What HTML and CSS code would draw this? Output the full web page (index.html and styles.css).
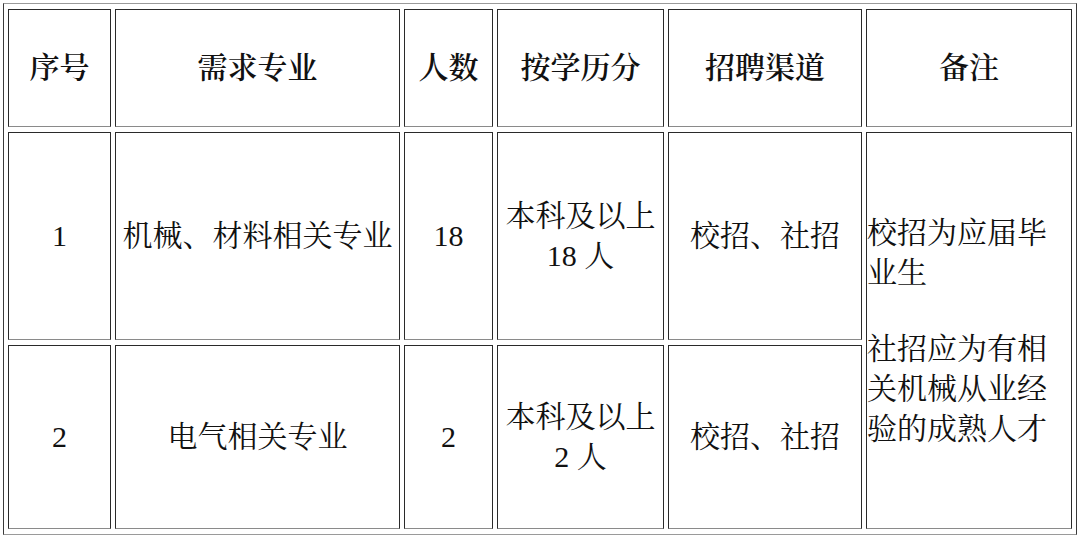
FILE: index.html
```html
<!DOCTYPE html>
<html lang="zh-CN">
<head>
<meta charset="utf-8">
<title>招聘需求</title>
<link rel="stylesheet" href="styles.css">
</head>
<body>
<table class="jobs">
  <colgroup>
    <col class="c1"><col class="c2"><col class="c3"><col class="c4"><col class="c5"><col class="c6">
  </colgroup>
  <tr class="head">
    <th>序号</th>
    <th>需求专业</th>
    <th>人数</th>
    <th>按学历分</th>
    <th>招聘渠道</th>
    <th>备注</th>
  </tr>
  <tr class="r1">
    <td>1</td>
    <td>机械、材料相关专业</td>
    <td>18</td>
    <td>本科及以上<br>18 人</td>
    <td>校招、社招</td>
    <td class="note" rowspan="2">
      <p>校招为应届毕业生</p>
      <p class="gap">社招应为有相关机械从业经验的成熟人才</p>
    </td>
  </tr>
  <tr class="r2">
    <td>2</td>
    <td>电气相关专业</td>
    <td>2</td>
    <td>本科及以上<br>2 人</td>
    <td>校招、社招</td>
  </tr>
</table>
</body>
</html>
```

FILE: styles.css
```css
html, body {
  margin: 0;
  padding: 0;
  background: #ffffff;
}

.jobs {
  margin: 3px 0 0 3px;
  width: 1074px;
  table-layout: fixed;
  border-collapse: separate;
  border-spacing: 4px 5px;
  border-top: 1px solid #9a9a9a;
  border-left: 1px solid #3a3a3a;
  border-right: 1px solid #3a3a3a;
  border-bottom: 1px solid #9a9a9a;
  font-family: "Liberation Serif", "Noto Serif CJK SC", "Noto Sans CJK SC", serif;
  font-size: 30px;
  line-height: 40px;
  color: #111;
}

.c1 { width: 103px; }
.c2 { width: 285px; }
.c3 { width: 89px; }
.c4 { width: 167px; }
.c5 { width: 194px; }
.c6 { width: 206px; }

.jobs th,
.jobs td {
  box-sizing: border-box;
  padding: 0 1px;
  text-align: center;
  vertical-align: middle;
  border-top: 1px solid #2a2a2a;
  border-left: 1px solid #2a2a2a;
  border-right: 1px solid #2a2a2a;
  border-bottom: 1px solid #8a8a8a;
}

.jobs th {
  font-weight: 600;
}

.head th { height: 118px; }
.r1 td { height: 208px; }
.r2 td { height: 184px; }

.jobs td.note {
  text-align: left;
  padding: 0;
}

.note p {
  margin: 0;
}

.note p.gap {
  margin-top: 36px;
}
```
